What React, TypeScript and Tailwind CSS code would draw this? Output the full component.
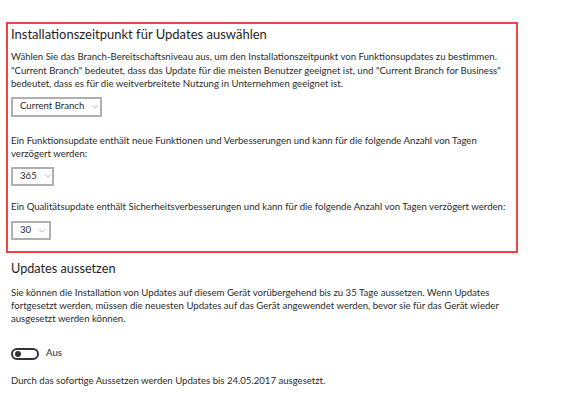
import { ChevronDown } from 'lucide-react';

function Dropdown({ label, className }: { label: string; className: string }) {
  return (
    <div
      className={`flex items-center gap-[6px] whitespace-nowrap border-2 border-[#b0b0b0] bg-white pl-[7px] pr-[5px] text-[9.6px] text-[#2b2b2b] ${className}`}
    >
      <span>{label}</span>
      <ChevronDown className="h-[10px] w-[10px] shrink-0 text-[#8a8a8a]" strokeWidth={1.5} />
    </div>
  );
}

export default function App() {
  return (
    <div
      className="h-[393px] w-[580px] overflow-hidden bg-white pl-[6px] pt-[22px] text-[#2b2b2b]"
      style={{ fontFamily: 'Lato, "Open Sans", sans-serif' }}
    >
      <section className="w-[512px] border-2 border-[#ef4444] pb-[11px] pl-[3px]">
        <h2 className="whitespace-nowrap text-[13px] leading-[20px] text-[#1f1f1f]">
          Installationszeitpunkt für Updates auswählen
        </h2>
        <p className="mt-[6px] whitespace-nowrap text-[9.6px] leading-[13.5px]">
          Wählen Sie das Branch-Bereitschaftsniveau aus, um den Installationszeitpunkt von Funktionsupdates zu bestimmen.
          <br />
          "Current Branch" bedeutet, dass das Update für die meisten Benutzer geeignet ist, und "Current Branch for Business"
          <br />
          bedeutet, dass es für die weitverbreitete Nutzung in Unternehmen geeignet ist.
        </p>
        <Dropdown label="Current Branch" className="mt-[6px] h-[20px] w-[91px]" />

        <p className="mt-[17px] whitespace-nowrap text-[9.6px] leading-[13.5px]">
          Ein Funktionsupdate enthält neue Funktionen und Verbesserungen und kann für die folgende Anzahl von Tagen
          <br />
          verzögert werden:
        </p>
        <Dropdown label="365" className="mt-[6px] h-[19px] w-[43px]" />

        <p className="mt-[14px] whitespace-nowrap text-[9.6px] leading-[13.5px]">
          Ein Qualitätsupdate enthält Sicherheitsverbesserungen und kann für die folgende Anzahl von Tagen verzögert werden:
        </p>
        <Dropdown label="30" className="mt-[8px] h-[19px] w-[40px]" />
      </section>

      <section className="pl-[5px]">
        <h2 className="mt-[6px] text-[12.7px] leading-[18px] text-[#1f1f1f]">Updates aussetzen</h2>
        <p className="mt-[10px] whitespace-nowrap text-[9.6px] leading-[12.8px]">
          Sie können die Installation von Updates auf diesem Gerät vorübergehend bis zu 35 Tage aussetzen. Wenn Updates
          <br />
          fortgesetzt werden, müssen die neuesten Updates auf das Gerät angewendet werden, bevor sie für das Gerät wieder
          <br />
          ausgesetzt werden können.
        </p>
        <div className="mt-[21px] flex items-center gap-[7px]">
          <div className="flex h-[12px] w-[28px] items-center rounded-full border-2 border-[#333] pl-[2px]">
            <div className="h-[6px] w-[6px] rounded-full bg-[#333]" />
          </div>
          <span className="text-[9.6px]">Aus</span>
        </div>
        <p className="mt-[13px] whitespace-nowrap text-[9.6px] leading-[13px]">
          Durch das sofortige Aussetzen werden Updates bis 24.05.2017 ausgesetzt.
        </p>
      </section>
    </div>
  );
}
